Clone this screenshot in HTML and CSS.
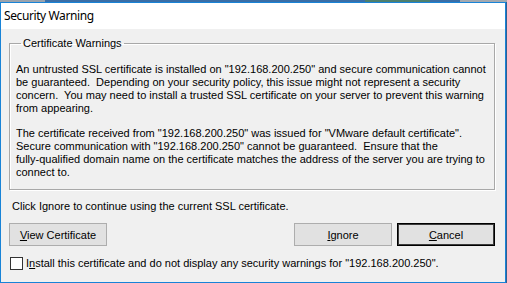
FILE: index.html
```html
<!DOCTYPE html>
<html lang="en">
<head>
	<meta charset="UTF-8">
	<title>Security Warning</title>
	<link rel="stylesheet" href="styles.css">
</head>
<body>
	<div class="backdrop">
		<span class="bd-gray"></span><span class="bd-blue"></span><span class="bd-green"></span><span class="bd-blue2"></span><span class="bd-gray2"></span>
	</div>
	<div class="window">
		<div class="titlebar">Security Warning</div>
		<div class="client">
			<fieldset class="group">
				<legend>Certificate Warnings</legend>
				<p>An untrusted SSL certificate is installed on "192.168.200.250" and secure communication cannot be guaranteed.&nbsp; Depending on your security policy, this issue might not represent a security concern.&nbsp; You may need to install a trusted SSL certificate on your server to prevent this warning from appearing.</p>
				<p>The certificate received from "192.168.200.250" was issued for "VMware default certificate". Secure communication with "192.168.200.250" cannot be guaranteed.&nbsp; Ensure that the fully&#8209;qualified domain name on the certificate matches the address of the server you are trying to connect to.</p>
			</fieldset>
			<div class="hint">Click Ignore to continue using the current SSL certificate.</div>
			<div class="buttons">
				<button class="btn"><u>V</u>iew Certificate</button>
				<div class="right-btns">
					<button class="btn"><u>I</u>gnore</button>
					<button class="btn default"><u>C</u>ancel</button>
				</div>
			</div>
			<label class="check">
				<span class="box"></span>
				<span>I<u>n</u>stall this certificate and do not display any security warnings for "192.168.200.250".</span>
			</label>
		</div>
	</div>
</body>
</html>
```
FILE: styles.css
```css
body{
	margin: 0;
	width: 507px;
	height: 283px;
	overflow: hidden;
	background: #2f5f93;
	font-family: "Liberation Sans", Arial, sans-serif;
	font-size: 11px;
	color: #000;
}
.backdrop{
	display: flex;
	height: 2px;
}
.backdrop span{
	height: 2px;
}
.bd-gray{ width: 45px; background: #9aa3ad; }
.bd-blue{ width: 320px; background: #3a6ea6; }
.bd-green{ width: 65px; background: #4d7f6e; }
.bd-blue2{ width: 30px; background: #3a6ea6; }
.bd-gray2{ flex: 1; background: #a3a9b0; }

.window{
	height: 279px;
	border: 1px solid #1883d7;
	margin-right: 1px;
	background: #f0f0f0;
	display: flex;
	flex-direction: column;
}
.titlebar{
	height: 26px;
	background: #fff;
	font-family: "Noto Sans", "Open Sans", sans-serif;
	font-size: 12px;
	letter-spacing: -0.4px;
	line-height: 26px;
	padding-left: 3px;
}
.client{
	flex: 1;
	display: flex;
	flex-direction: column;
	padding: 0 10px 0 8px;
}
.group{
	margin: 8px 0 0 0;
	padding: 13px 6px 10px 6px;
	border: 1px solid #a8a8a8;
	box-shadow: inset 1px 1px 0 #fff, 1px 1px 0 #fff;
	min-width: 0;
}
.group legend{
	margin-left: 5px;
	padding: 0 2px;
	line-height: 13px;
}
.group p{
	margin: 0 0 12px 0;
	line-height: 13px;
}
.group p:last-child{
	margin-bottom: 0;
}
.hint{
	margin: 10px 0 0 3px;
	line-height: 13px;
}
.buttons{
	display: flex;
	justify-content: space-between;
	margin-top: 10px;
}
.right-btns{
	display: flex;
	gap: 5px;
}
.btn{
	width: 98px;
	height: 23px;
	padding: 0;
	background: #e1e1e1;
	border: 1px solid #adadad;
	border-radius: 0;
	font-family: "Liberation Sans", Arial, sans-serif;
	font-size: 11px;
	color: #000;
}
.btn.default{
	border: 1px solid #000;
	box-shadow: inset 0 0 0 1px #3c3c3c;
}
.check{
	display: flex;
	align-items: center;
	gap: 3px;
	margin: 11px 0 0 1px;
	line-height: 13px;
}
.check .box{
	width: 11px;
	height: 11px;
	border: 1px solid #333;
	background: #fff;
}
```
